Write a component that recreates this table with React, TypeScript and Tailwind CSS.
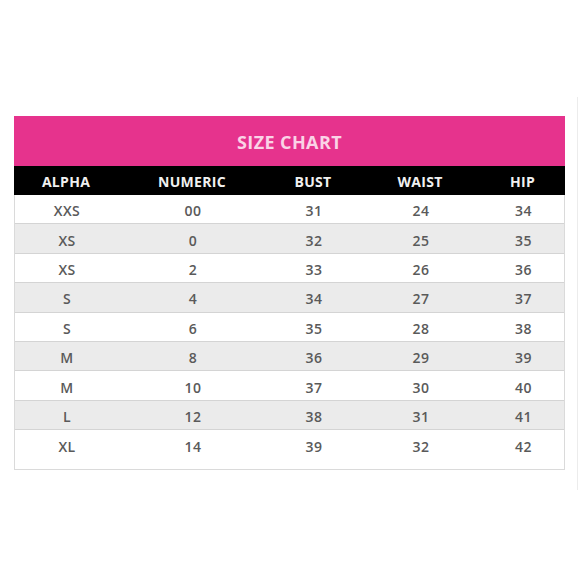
import React from "react";

const rows: [string, string, string, string, string][] = [
  ["XXS", "00", "31", "24", "34"],
  ["XS", "0", "32", "25", "35"],
  ["XS", "2", "33", "26", "36"],
  ["S", "4", "34", "27", "37"],
  ["S", "6", "35", "28", "38"],
  ["M", "8", "36", "29", "39"],
  ["M", "10", "37", "30", "40"],
  ["L", "12", "38", "31", "41"],
  ["XL", "14", "39", "32", "42"],
];

const headers = ["ALPHA", "NUMERIC", "BUST", "WAIST", "HIP"];
const grid = "grid grid-cols-[104px_148px_94px_120px_85px]";

export default function App() {
  return (
    <div
      className="w-[580px] h-[580px] bg-white flex items-start pt-[116px] pl-[14px]"
      style={{ fontFamily: '"Open Sans", "Liberation Sans", sans-serif' }}
    >
      <div className="w-[551px] flex flex-col">
        <div className="h-[50px] bg-[#e6338d] flex items-center justify-center pt-[3px]">
          <span className="text-[18px] font-bold tracking-[0.4px] text-[#fad3e6]">SIZE CHART</span>
        </div>
        <div className={`${grid} h-[29px] bg-black items-center pt-[1px]`}>
          {headers.map((h) => (
            <div key={h} className="text-center text-[#f0f0f0] text-[14px] font-bold tracking-[0.3px]">
              {h}
            </div>
          ))}
        </div>
        <div className="border-x border-b border-[#dadada]">
          {rows.map((r, i) => {
            const last = i === rows.length - 1;
            return (
              <div
                key={i}
                className={`${grid} ${last ? "h-[39px] items-start" : "h-[29.4px] items-center border-b border-[#d4d4d4]"} ${
                  i % 2 === 1 ? "bg-[#ebebeb]" : "bg-white"
                }`}
              >
                {r.map((c, j) => (
                  <div
                    key={j}
                    className={`text-center text-[14px] font-semibold tracking-[0.4px] text-[#5a5a5a] pt-[3px] ${last ? "h-[29px] flex items-center justify-center" : ""}`}
                  >
                    {c}
                  </div>
                ))}
              </div>
            );
          })}
        </div>
      </div>
      <div className="ml-[12px] mt-[-19px] w-px h-[393px] bg-[#ececec]" />
    </div>
  );
}
